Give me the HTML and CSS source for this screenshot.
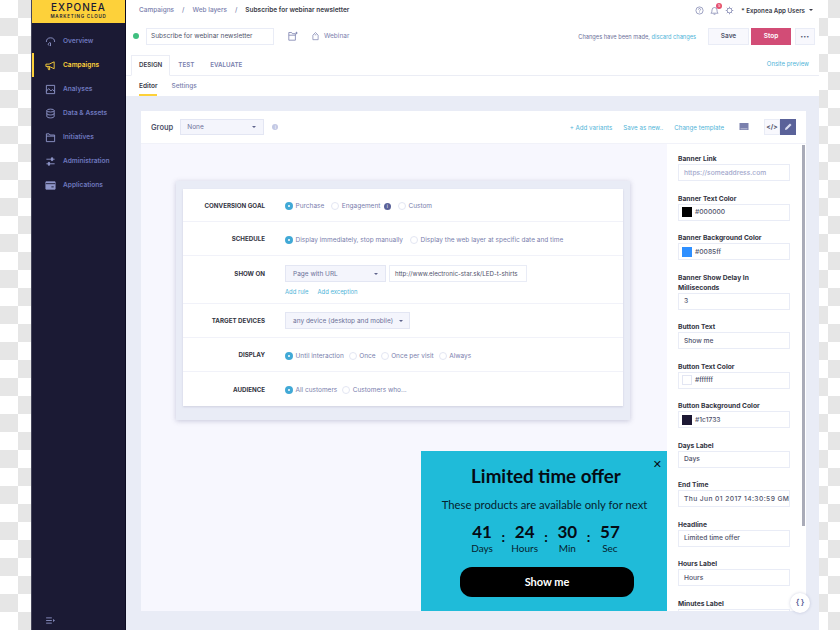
FILE: index.html
```html
<!DOCTYPE html>
<html lang="en">
<head>
  <meta charset="UTF-8">
  <meta name="viewport" content="width=device-width, initial-scale=1.0">
  <title>Exponea - Subscribe for webinar newsletter</title>
  <link rel="stylesheet" href="styles.css">
</head>
<body>
  <div class="checker checker-left"></div>

  <nav class="sidebar">
    <div class="logo">
      <div class="logo-name">EXPONEA</div>
      <div class="logo-sub">MARKETING CLOUD</div>
    </div>
    <ul class="menu">
      <li class="menu-item">
        <svg viewBox="0 0 12 12"><path d="M1.5 6.5a4.5 4.5 0 0 1 9 0M6 11V7.5M4.5 10.5a1.6 1.6 0 0 1 1.5-3"/></svg>
        Overview
      </li>
      <li class="menu-item active">
        <svg viewBox="0 0 12 12"><path d="M1 4.5h3.5L10 2v7.5L4.5 7H1zM3 7l.8 3.5h1.4L4.6 7"/></svg>
        Campaigns
      </li>
      <li class="menu-item">
        <svg viewBox="0 0 12 12"><path d="M1.5 1.5h9v9h-9zM1.5 8l2.5-3 2.5 2.5 1.5-1.5 2.5 2"/></svg>
        Analyses
      </li>
      <li class="menu-item">
        <svg viewBox="0 0 12 12"><ellipse cx="6" cy="2.8" rx="4" ry="1.6"/><path d="M2 2.8v6.4c0 .9 1.8 1.6 4 1.6s4-.7 4-1.6V2.8M2 6c0 .9 1.8 1.6 4 1.6s4-.7 4-1.6"/></svg>
        Data &amp; Assets
      </li>
      <li class="menu-item">
        <svg viewBox="0 0 12 12"><path d="M1.5 2h3l1 1.3h5v7.2h-9zM1.5 4.5h9"/></svg>
        Initiatives
      </li>
      <li class="menu-item">
        <svg viewBox="0 0 12 12"><path d="M1.5 3.5h9M1.5 8.5h9"/><path class="knob" d="M7 2h1.4v3H7zM3.6 7H5v3H3.6z"/></svg>
        Administration
      </li>
      <li class="menu-item">
        <svg viewBox="0 0 12 12"><path class="knob" d="M1 2h10v8H1z"/><path class="cut" d="M1 4h10M7 7.5h2.5"/></svg>
        Applications
      </li>
    </ul>
    <div class="collapse">
      <svg viewBox="0 0 10 8"><path d="M0 1h6.5M0 4h6.5M0 7h6.5"/><path class="knob" d="M8 2.4 10 4 8 5.6z"/></svg>
    </div>
  </nav>

  <main class="main">
    <header class="head">
      <div class="topbar">
        <div class="crumbs">
          <span>Campaigns</span><i>/</i><span>Web layers</span><i>/</i><b>Subscribe for webinar newsletter</b>
        </div>
        <div class="user">
          <svg class="top-icon" viewBox="0 0 10 10"><circle cx="5" cy="5" r="4"/><path d="M3.8 4a1.2 1.2 0 1 1 1.8 1c-.4.3-.6.5-.6 1M5 7.2v.5"/></svg>
          <span class="bell">
            <svg class="top-icon" viewBox="0 0 10 10"><path d="M1 8c1-1 1.2-2 1.2-3.5a2.800 2.800 0 0 1 5.600 0C7.800 6 8 7 9 8zM4 9.200h2"/></svg>
            <em class="badge">5</em>
          </span>
          <svg class="top-icon" viewBox="0 0 10 10"><circle cx="5" cy="5" r="2.600"/><path d="M5 .8v1.600M5 7.600v1.600M.8 5h1.600M7.600 5h1.600M2 2l1.200 1.200M6.800 6.800 8 8M8 2 6.800 3.200M3.200 6.800 2 8"/></svg>
          <span class="user-name">* Exponea App Users</span>
          <span class="caret dark"></span>
        </div>
      </div>

      <div class="titlebar">
        <span class="status-dot"></span>
        <div class="title-input">Subscribe for webinar newsletter</div>
        <svg class="folder-icon" viewBox="0 0 10 10"><path d="M.8 1.500h2.800l.8 1.200h3v6.500H.8zM.8 4.200h6.600M8.500 .8v2.400M7.400 2h2.200"/></svg>
        <svg class="tag-icon" viewBox="0 0 8 10"><path d="M1 4 4 1l3 3v5.200H1zM3 3.600h2"/></svg>
        <span class="tag-name">Webinar</span>
        <div class="actions">
          <span class="changes">Changes have been made, <a>discard changes</a></span>
          <button class="btn btn-save">Save</button>
          <button class="btn btn-stop">Stop</button>
          <button class="btn btn-more">&bull;&bull;&bull;</button>
        </div>
      </div>

      <div class="tabs">
        <span class="tab current">DESIGN</span>
        <span class="tab">TEST</span>
        <span class="tab">EVALUATE</span>
        <a class="preview">Onsite preview</a>
      </div>

      <div class="subtabs">
        <span class="subtab current">Editor</span>
        <span class="subtab">Settings</span>
      </div>
    </header>

    <section class="panel">
      <div class="toolbar">
        <span class="group-label">Group</span>
        <div class="select group-select">None <span class="caret"></span></div>
        <span class="info-dot">i</span>
        <div class="tools">
          <a>+ Add variants</a>
          <a>Save as new..</a>
          <a>Change template</a>
          <svg class="screen-icon" viewBox="0 0 10 10"><path d="M.5 1h9v7h-9z"/><path class="cut" d="M1.500 6.800h7"/></svg>
          <div class="mode">
            <span class="mode-btn">&lt;/&gt;</span>
            <span class="mode-btn on">
              <svg viewBox="0 0 10 10"><path d="M2 8l.4-2L7 1.500 8.500 3 4 7.600z"/></svg>
            </span>
          </div>
        </div>
      </div>

      <div class="workspace">
        <div class="canvas">
          <div class="card-frame">
            <div class="card">
              <div class="row">
                <div class="row-label">CONVERSION GOAL</div>
                <div class="options">
                  <span class="radio on">Purchase</span>
                  <span class="radio">Engagement <em class="info-solid">i</em></span>
                  <span class="radio">Custom</span>
                </div>
              </div>
              <div class="row">
                <div class="row-label">SCHEDULE</div>
                <div class="options">
                  <span class="radio on">Display immediately, stop manually</span>
                  <span class="radio">Display the web layer at specific date and time</span>
                </div>
              </div>
              <div class="row row-tall">
                <div class="row-label">SHOW ON</div>
                <div>
                  <div class="url-fields">
                    <div class="select url-select">Page with URL <span class="caret"></span></div>
                    <div class="url-input">http://www.electronic-star.sk/LED-t-shirts</div>
                  </div>
                  <div class="rule-links"><a>Add rule</a><a>Add exception</a></div>
                </div>
              </div>
              <div class="row">
                <div class="row-label">TARGET DEVICES</div>
                <div class="select device-select">any device (desktop and mobile) <span class="caret"></span></div>
              </div>
              <div class="row">
                <div class="row-label">DISPLAY</div>
                <div class="options options-narrow">
                  <span class="radio on">Until interaction</span>
                  <span class="radio">Once</span>
                  <span class="radio">Once per visit</span>
                  <span class="radio">Always</span>
                </div>
              </div>
              <div class="row">
                <div class="row-label">AUDIENCE</div>
                <div class="options options-narrow">
                  <span class="radio on">All customers</span>
                  <span class="radio">Customers who...</span>
                </div>
              </div>
            </div>
          </div>

          <div class="popup">
            <span class="popup-close">&#10005;</span>
            <h2>Limited time offer</h2>
            <p>These products are available only for next</p>
            <div class="countdown">
              <div class="unit"><strong>41</strong><span>Days</span></div>
              <b class="colon">:</b>
              <div class="unit"><strong>24</strong><span>Hours</span></div>
              <b class="colon">:</b>
              <div class="unit"><strong>30</strong><span>Min</span></div>
              <b class="colon">:</b>
              <div class="unit"><strong>57</strong><span>Sec</span></div>
            </div>
            <div class="popup-btn">Show me</div>
          </div>
        </div>

        <aside class="props">
          <div class="field"><label>Banner Link</label><div class="input placeholder">https://someaddress.com</div></div>
          <div class="field"><label>Banner Text Color</label><div class="input"><i class="swatch swatch-black"></i>#000000</div></div>
          <div class="field"><label>Banner Background Color</label><div class="input"><i class="swatch swatch-blue"></i>#0085ff</div></div>
          <div class="field"><label>Banner Show Delay In Milliseconds</label><div class="input">3</div></div>
          <div class="field"><label>Button Text</label><div class="input">Show me</div></div>
          <div class="field"><label>Button Text Color</label><div class="input"><i class="swatch swatch-white"></i>#ffffff</div></div>
          <div class="field"><label>Button Background Color</label><div class="input"><i class="swatch swatch-navy"></i>#1c1733</div></div>
          <div class="field"><label>Days Label</label><div class="input">Days</div></div>
          <div class="field"><label>End Time</label><div class="input input-long">Thu Jun 01 2017 14:30:59 GMT</div></div>
          <div class="field"><label>Headline</label><div class="input">Limited time offer</div></div>
          <div class="field"><label>Hours Label</label><div class="input">Hours</div></div>
          <div class="field"><label>Minutes Label</label><div class="input"></div></div>
          <div class="scroll-thumb"></div>
        </aside>
      </div>
      <div class="json-btn">{&thinsp;}</div>
    </section>
  </main>

  <div class="checker checker-right"></div>
</body>
</html>
```

FILE: styles.css
```css
*, *::before {
  box-sizing: border-box;
}
html, body {
  height: 100%;
}
body {
  display: flex;
  margin: 0;
  overflow: hidden;
  font-family: Inter, "Liberation Sans", sans-serif;
  font-size: 6.5px;
  color: #6d7199;
  background: #fff;
}
a {
  color: #4fb4d8;
}
ul {
  list-style: none;
  margin: 0;
  padding: 0;
}

.checker {
  flex: none;
  background-color: #fff;
  background-image: conic-gradient(#e6e6e6 25%, #fff 0 50%, #e6e6e6 0 75%, #fff 0);
  background-size: 36px 36px;
}
.checker-left {
  width: 31px;
}
.checker-right {
  width: 21px;
  background-position: -9px 0;
}

.sidebar {
  display: flex;
  flex-direction: column;
  flex: none;
  width: 95px;
  background: #1b1a34;
  border-left: 1px solid #45455a;
  border-right: 1px solid #0d0c22;
}
.logo {
  height: 23px;
  padding-top: 2px;
  background: #fdd13a;
  color: #1b1a34;
  text-align: center;
}
.logo-name {
  font-size: 10px;
  font-weight: 500;
  line-height: 11px;
  letter-spacing: 1px;
}
.logo-sub {
  margin-top: 1px;
  font-size: 4.5px;
  font-weight: 600;
  line-height: 6px;
  letter-spacing: .8px;
}
.menu {
  padding-top: 6px;
}
.menu-item {
  display: flex;
  align-items: center;
  gap: 7px;
  height: 24px;
  padding-left: 13px;
  font-size: 6.6px;
  font-weight: 600;
  color: #6d77bd;
}
.menu-item svg {
  width: 11px;
  height: 11px;
  fill: none;
  stroke: #8f96c9;
  stroke-width: 1;
}
.menu-item svg .knob {
  fill: #8f96c9;
}
.menu-item svg .cut {
  stroke: #1b1a34;
}
.menu-item.active {
  padding-left: 11px;
  border-left: 2px solid #fdd13a;
  color: #fdd13a;
}
.menu-item.active svg {
  stroke: #fdd13a;
}
.collapse {
  margin-top: auto;
  padding: 0 0 6px 14px;
  line-height: 0;
}
.collapse svg {
  width: 9px;
  height: 7px;
  fill: none;
  stroke: #8f96c9;
}
.collapse svg .knob {
  fill: #8f96c9;
  stroke: none;
}

.main {
  display: flex;
  flex-direction: column;
  flex: 1;
  min-width: 0;
  background: #e9ecf6;
}
.head {
  flex: none;
  height: 96px;
  background: #fff;
}
.topbar {
  display: flex;
  align-items: center;
  justify-content: space-between;
  height: 20px;
  padding: 0 6px 0 13px;
}
.crumbs {
  display: flex;
  gap: 8px;
  color: #7a80ad;
  font-weight: 500;
}
.crumbs i {
  font-style: normal;
}
.crumbs b {
  font-weight: 600;
  color: #3a3b48;
}
.user {
  display: flex;
  align-items: center;
}
.top-icon {
  width: 9px;
  height: 9px;
  fill: none;
  stroke: #7a80ad;
  stroke-width: .8;
}
.bell {
  position: relative;
  display: flex;
  margin: 0 6px;
}
.badge {
  position: absolute;
  top: -3px;
  right: -3px;
  width: 6px;
  height: 6px;
  border-radius: 50%;
  background: #e5506f;
  color: #fff;
  font-size: 4px;
  font-style: normal;
  line-height: 6px;
  text-align: center;
}
.user-name {
  margin-left: 7px;
  font-weight: 600;
  font-size: 6.2px;
  color: #3a3b48;
}
.caret {
  display: inline-block;
  width: 0;
  height: 0;
  border-left: 2px solid transparent;
  border-right: 2px solid transparent;
  border-top: 2px solid #5f648c;
}
.caret.dark {
  margin-left: 4px;
  border-top-color: #3a3b48;
}

.titlebar {
  display: flex;
  align-items: center;
  height: 32px;
  padding: 0 4px 0 7px;
}
.status-dot {
  width: 6px;
  height: 6px;
  border-radius: 50%;
  background: #3fbf7f;
}
.title-input {
  width: 128px;
  height: 17px;
  margin-left: 7px;
  padding-left: 4px;
  border: 1px solid #e9ecf6;
  line-height: 15px;
  color: #50536b;
}
.folder-icon {
  width: 10px;
  height: 10px;
  margin-left: 14px;
  fill: none;
  stroke: #7a80ad;
  stroke-width: .8;
}
.tag-icon {
  width: 7px;
  height: 10px;
  margin-left: 14px;
  fill: none;
  stroke: #7a80ad;
  stroke-width: .8;
}
.tag-name {
  margin-left: 5px;
  color: #7a80ad;
}
.actions {
  display: flex;
  align-items: center;
  margin-left: auto;
}
.changes {
  margin-right: 12px;
  font-size: 5.7px;
  color: #6d7199;
}
.btn {
  height: 17px;
  padding: 0;
  border: 1px solid #e9ecf6;
  background: #f8f8fd;
  font-family: inherit;
  font-size: 6.5px;
  font-weight: 600;
  color: #50536b;
}
.btn-save {
  width: 41px;
}
.btn-stop {
  width: 40px;
  margin-left: 2px;
  border-color: #d24c76;
  background: #d24c76;
  color: #fff;
}
.btn-more {
  width: 20px;
  margin-left: 4px;
  font-size: 5px;
  letter-spacing: .5px;
}

.tabs {
  display: flex;
  align-items: flex-end;
  height: 24px;
  padding: 0 10px 0 5px;
  border-bottom: 1px solid #ebedf5;
}
.tab {
  height: 20px;
  padding: 0 8px;
  font-size: 6.2px;
  font-weight: 600;
  line-height: 20px;
  color: #7a80ad;
}
.tab.current {
  height: 21px;
  margin-bottom: -1px;
  padding: 0 7px;
  border: 1px solid #ebedf5;
  border-bottom-color: #fff;
  line-height: 18px;
  color: #3a3b48;
}
.preview {
  margin-left: auto;
  align-self: center;
  font-size: 6px;
}
.subtabs {
  display: flex;
  gap: 14px;
  height: 20px;
  padding-left: 13px;
}
.subtab {
  height: 20px;
  font-weight: 500;
  line-height: 20px;
  color: #7a80ad;
}
.subtab.current {
  font-weight: 600;
  color: #3a3b48;
  border-bottom: 2px solid #fdd13a;
}

.panel {
  position: relative;
  display: flex;
  flex-direction: column;
  height: 500px;
  margin: 15px 13px 0 15px;
}
.toolbar {
  display: flex;
  align-items: center;
  flex: none;
  height: 33px;
  padding: 0 10px;
  background: #fff;
  border-bottom: 1px solid #f1f2f9;
}
.group-label {
  font-size: 7.5px;
  font-weight: 600;
  color: #50536b;
}
.select {
  display: flex;
  align-items: center;
  justify-content: space-between;
  border: 1px solid #e3e6f3;
  background: #f4f5fc;
  color: #6d7199;
  white-space: nowrap;
}
.group-select {
  width: 84px;
  height: 16px;
  margin-left: 7px;
  padding: 0 7px 0 6px;
}
.info-dot {
  width: 6px;
  height: 6px;
  margin-left: 8px;
  border-radius: 50%;
  background: #c3c8e4;
  color: #fff;
  font-size: 5px;
  line-height: 6px;
  text-align: center;
}
.tools {
  display: flex;
  align-items: center;
  margin-left: auto;
}
.tools a {
  margin-right: 11px;
  font-size: 6.2px;
}
.screen-icon {
  width: 10px;
  height: 10px;
  margin: 0 15px 0 4px;
  fill: #7a80ad;
}
.screen-icon .cut {
  stroke: #fff;
  stroke-width: .5;
}
.mode {
  display: flex;
}
.mode-btn {
  width: 16px;
  height: 16px;
  border: 1px solid #e9ecf6;
  background: #f8f8fd;
  font-size: 6.5px;
  font-weight: 700;
  line-height: 14px;
  text-align: center;
  color: #50536b;
}
.mode-btn.on {
  background: #5a6299;
  border-color: #5a6299;
}
.mode-btn svg {
  width: 10px;
  height: 10px;
  margin-top: 2px;
  fill: #d9dcf0;
}

.workspace {
  display: flex;
  flex: 1;
  min-height: 0;
}
.canvas {
  position: relative;
  flex: 1;
  min-width: 0;
  padding: 37px 0 0 35px;
  background: #f7f7fe;
}
.card-frame {
  width: 454px;
  padding: 8px 7px 14px;
  background: #e9ecf6;
  box-shadow: 0 1px 5px rgba(60, 60, 110, .25);
}
.card {
  background: #fff;
  box-shadow: 0 1px 2px rgba(60, 60, 110, .15);
}
.row {
  display: flex;
  align-items: center;
  gap: 20px;
  height: 34px;
  border-bottom: 1px solid #f1f2f9;
}
.row:first-child {
  height: 33px;
}
.row:last-child {
  border-bottom: 0;
}
.row-tall {
  align-items: flex-start;
  height: 48px;
  padding-top: 9px;
}
.row-label {
  flex: none;
  width: 82px;
  font-size: 6.2px;
  font-weight: 700;
  line-height: 17px;
  text-align: right;
  color: #33343f;
}
.options {
  display: flex;
  align-items: center;
  gap: 7px;
  margin-top: 2px;
}
.options-narrow {
  gap: 5px;
}
.radio {
  display: flex;
  align-items: center;
  gap: 2.5px;
  color: #7a80ad;
}
.radio::before {
  content: "";
  width: 8px;
  height: 8px;
  border: 1px solid #e3e6f3;
  border-radius: 50%;
  background: #fff;
}
.radio.on::before {
  border: 3px solid #41a9d6;
}
.info-solid {
  width: 7px;
  height: 7px;
  margin-left: 1px;
  border-radius: 50%;
  background: #5a6299;
  color: #fff;
  font-size: 5px;
  font-style: normal;
  line-height: 7px;
  text-align: center;
}
.url-fields {
  display: flex;
  gap: 3px;
}
.url-select {
  width: 101px;
  height: 17px;
  padding: 0 7px;
}
.url-input {
  width: 138px;
  height: 17px;
  padding-left: 5px;
  border: 1px solid #e9ecf6;
  font-size: 6.2px;
  line-height: 15px;
  white-space: nowrap;
  color: #50536b;
}
.rule-links {
  display: flex;
  gap: 9px;
  margin-top: 6px;
  font-size: 5.9px;
  line-height: 8px;
}
.device-select {
  width: 125px;
  height: 17px;
  padding: 0 6px 0 7px;
}

.popup {
  position: absolute;
  right: -1px;
  bottom: 0;
  width: 247px;
  height: 160px;
  padding-top: 13px;
  background: #1fbbd9;
  color: #06222e;
  font-family: Lato, "Open Sans", sans-serif;
  text-align: center;
}
.popup h2 {
  margin: 0;
  padding-left: 3px;
  font-size: 18.8px;
  font-weight: 700;
  line-height: 23px;
  color: #050b14;
}
.popup p {
  margin: 10px 0 0;
  font-size: 11.3px;
  line-height: 15px;
}
.popup-close {
  position: absolute;
  top: 7px;
  right: 6px;
  font-family: "DejaVu Sans", sans-serif;
  font-size: 11px;
  font-weight: 700;
  line-height: 13px;
  color: #050b14;
}
.countdown {
  display: flex;
  justify-content: center;
  gap: 5.5px;
  margin-top: 9px;
  padding-left: 3px;
}
.unit {
  display: flex;
  flex-direction: column;
  width: 28px;
}
.unit strong {
  font-size: 17px;
  line-height: 21px;
  color: #050b14;
}
.unit span {
  font-size: 10px;
  line-height: 12px;
}
.colon {
  font-size: 14px;
  line-height: 32px;
  color: #050b14;
}
.popup-btn {
  width: 174px;
  height: 30px;
  margin: 13px 0 0 39px;
  border-radius: 12px;
  background: #000;
  color: #fff;
  font-size: 11px;
  font-weight: 700;
  line-height: 30px;
}

.props {
  position: relative;
  flex: none;
  width: 139px;
  padding: 10px 16px 0 11px;
  background: #fff;
  overflow: hidden;
}
.field {
  margin-bottom: 12.5px;
}
.field label {
  display: block;
  font-size: 6.7px;
  font-weight: 700;
  line-height: 10px;
  color: #33343f;
}
.input {
  display: flex;
  align-items: center;
  height: 17px;
  padding-left: 5px;
  border: 1px solid #e9ecf6;
  overflow: hidden;
  white-space: nowrap;
  font-weight: 500;
  font-size: 6.7px;
  color: #50536b;
}
.input.placeholder {
  color: #a3a8cc;
}
.input-long {
  letter-spacing: .4px;
}
.swatch {
  flex: none;
  width: 10px;
  height: 10px;
  margin: 0 3px 0 -2px;
}
.swatch-black {
  background: #000;
}
.swatch-blue {
  background: #2e8fff;
}
.swatch-white {
  background: #fff;
  border: 1px solid #e3e6f3;
}
.swatch-navy {
  background: #1c1733;
}
.scroll-thumb {
  position: absolute;
  top: 1px;
  right: 1px;
  width: 3px;
  height: 381px;
  background: #a9abb8;
}
.json-btn {
  position: absolute;
  right: -4px;
  bottom: -2px;
  width: 20px;
  height: 20px;
  border-radius: 50%;
  background: #fff;
  box-shadow: 0 0 3px rgba(90, 98, 153, .3);
  font-size: 8px;
  font-weight: 600;
  line-height: 19px;
  text-align: center;
  color: #5a6299;
}
```
